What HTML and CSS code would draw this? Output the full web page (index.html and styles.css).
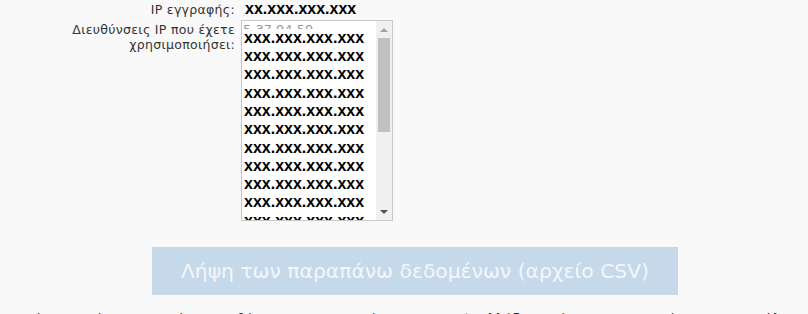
FILE: index.html
```html
<!doctype html>
<html>
<head>
    <meta charset="utf-8">
    <title>Στοιχεία λογαριασμού</title>
    <link rel="stylesheet" href="styles.css">
</head>
<body>

<div class="info">
    <div class="row">
        <div class="label label-1">IP εγγραφής:</div>
        <div class="value">xx.xxx.xxx.xxx</div>
    </div>
    <div class="row row-list">
        <div class="label label-2">Διευθύνσεις IP που έχετε<br>χρησιμοποιήσει:</div>
        <div class="iplist">
            <div class="items">
                <div class="item"><span class="orig">5.37.94.59</span><span class="mask">xxx.xxx.xxx.xxx</span></div>
                <div class="item"><span class="orig">5.37.94.61</span><span class="mask">xxx.xxx.xxx.xxx</span></div>
                <div class="item"><span class="orig">5.37.95.12</span><span class="mask">xxx.xxx.xxx.xxx</span></div>
                <div class="item"><span class="orig">5.54.107.3</span><span class="mask">xxx.xxx.xxx.xxx</span></div>
                <div class="item"><span class="orig">5.54.118.9</span><span class="mask">xxx.xxx.xxx.xxx</span></div>
                <div class="item"><span class="orig">5.55.24.17</span><span class="mask">xxx.xxx.xxx.xxx</span></div>
                <div class="item"><span class="orig">5.55.31.20</span><span class="mask">xxx.xxx.xxx.xxx</span></div>
                <div class="item"><span class="orig">5.55.39.14</span><span class="mask">xxx.xxx.xxx.xxx</span></div>
                <div class="item"><span class="orig">5.55.42.88</span><span class="mask">xxx.xxx.xxx.xxx</span></div>
                <div class="item"><span class="orig">5.55.60.71</span><span class="mask">xxx.xxx.xxx.xxx</span></div>
                <div class="item"><span class="orig">5.55.71.46</span><span class="mask">xxx.xxx.xxx.xxx</span></div>
            </div>
            <div class="scrollbar">
                <div class="arrow"><span class="up"></span></div>
                <div class="thumb"></div>
                <div class="track"></div>
                <div class="arrow"><span class="down"></span></div>
            </div>
        </div>
    </div>
</div>

<button type="button" class="download">Λήψη των παραπάνω δεδομένων (αρχείο CSV)</button>

<p class="note">Αν κάποια από τις παραπάνω διευθύνσεις δεν σας φαίνεται γνωστή, αλλάξτε αμέσως τον κωδικό σας για ασφάλεια.</p>

</body>
</html>
```

FILE: styles.css
```css
body {
    margin: 0;
    background: #f9f9f9;
    color: #333;
    font-size: 12.5px;
    font-family: "DejaVu Sans", Verdana, sans-serif;
}

.row {
    display: flex;
}

.row-list {
    margin-top: 2px;
}

.label {
    width: 235px;
    text-align: right;
    line-height: 15px;
    padding-top: 2px;
    letter-spacing: 0.3px;
}

.value {
    margin-left: 10px;
    color: #000;
    font: bold 16px/18px "Liberation Sans", Arial, sans-serif;
}

.iplist {
    margin-left: 6px;
    width: 152px;
    height: 201px;
    box-sizing: border-box;
    border: 1px solid #c8c8c8;
    background: #fff;
    display: flex;
}

.items {
    flex: 1;
    overflow: hidden;
}

.item {
    position: relative;
    height: 18.3px;
    line-height: 18.3px;
    padding-left: 1px;
}

.orig {
    color: #999;
    font-size: 13px;
}

.mask {
    position: absolute;
    z-index: 1;
    top: 7.8px;
    left: 2px;
    right: 0;
    background: #fff;
    color: #000;
    font: bold 16px/18.4px "Liberation Sans", Arial, sans-serif;
}

.scrollbar {
    width: 16px;
    background: #f0f0f0;
    display: flex;
    flex-direction: column;
    position: relative;
    z-index: 2;
}

.arrow {
    height: 17px;
    display: flex;
    align-items: center;
    justify-content: center;
}

.up {
    border-left: 4px solid transparent;
    border-right: 4px solid transparent;
    border-bottom: 4px solid #a3a3a3;
}

.down {
    border-left: 4px solid transparent;
    border-right: 4px solid transparent;
    border-top: 4px solid #505050;
}

.thumb {
    height: 94px;
    margin: 0 2px;
    background: #c1c1c1;
}

.track {
    flex: 1;
}

.download {
    display: block;
    margin: 26px 0 0 152px;
    width: 526px;
    height: 48px;
    border: 0;
    padding: 0;
    background: #c6d9ea;
    color: #f3f7fb;
    font-size: 20.3px;
    font-family: "DejaVu Sans", Verdana, sans-serif;
}

.note {
    margin: 16px 0 0 4px;
    font-size: 13px;
    letter-spacing: 0.4px;
    color: #333;
    white-space: nowrap;
}
```
